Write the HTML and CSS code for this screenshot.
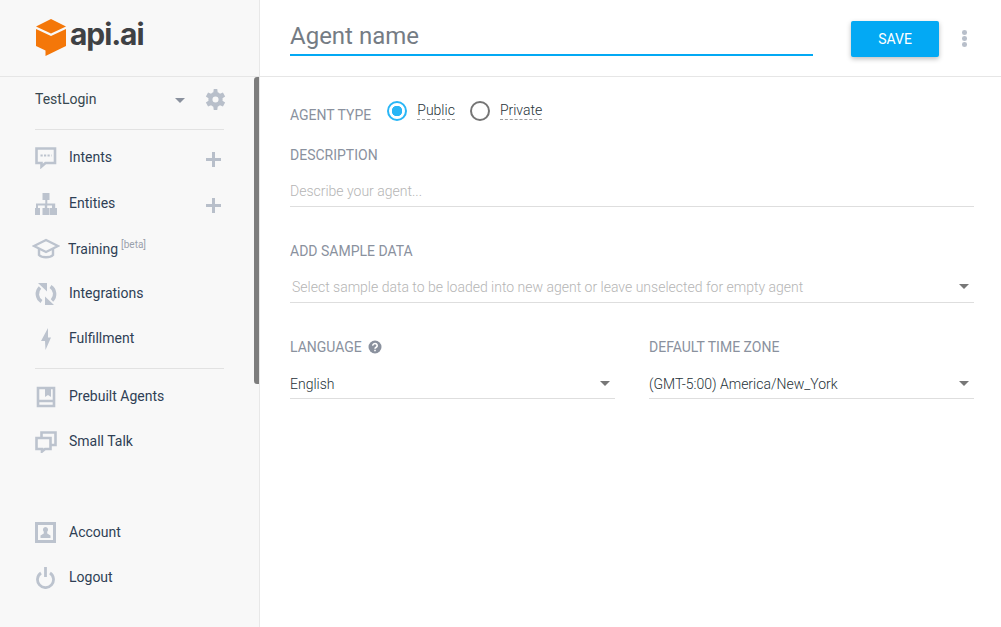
FILE: index.html
```html
<!DOCTYPE html>
<html lang="en">
<head>
	<meta charset="UTF-8">
	<title>api.ai</title>
	<link rel="stylesheet" href="styles.css">
</head>
<body>
	<aside class="sidebar">
		<div class="logo">
			<svg class="logo-mark" width="32" height="38" viewBox="0 0 32 38">
				<path fill="#f47709" d="M16 0 31 7.500 16 14.500 1 7.500z"/>
				<path fill="#f47709" d="M1 10 16 17 31 10V27L10.500 37V31.500L1 27z"/>
			</svg>
			<span class="logo-text">api.ai</span>
		</div>
		<div class="side-scroll">
			<div class="scrollbar"></div>
			<div class="agent-row">
				<span class="agent-name">TestLogin</span>
				<span class="caret caret-side"></span>
				<svg class="gear" width="21" height="21" viewBox="0 0 24 24">
					<path fill="#b8bfca" d="M20 13.500a8 8 0 0 0 0-3l3-2-2.500-4.500-3.400 1.300a8 8 0 0 0-2.600-1.500L14 0H10l-.5 3.800a8 8 0 0 0-2.600 1.500L3.500 4 1 8.500l3 2a8 8 0 0 0 0 3l-3 2L3.500 20l3.400-1.300a8 8 0 0 0 2.600 1.500L10 24h4l.5-3.800a8 8 0 0 0 2.600-1.500l3.400 1.300 2.500-4.500zM12 15.500a3.500 3.500 0 1 1 0-7 3.500 3.500 0 0 1 0 7z"/>
				</svg>
			</div>
			<nav class="nav nav-main">
				<a class="nav-item nav-item-first">
					<svg class="nav-icon" width="22" height="22" viewBox="0 0 22 22">
						<path fill="none" stroke="#bcc3ce" stroke-width="2.600" d="M1.500 1.500h18.500v14.500H10.500l-4 3.500V16H1.500z"/>
						<path stroke="#bcc3ce" stroke-width="2.200" stroke-dasharray="2.200 1.300" d="M5.500 8.500h11"/>
					</svg>
					<span class="nav-label">Intents</span>
					<span class="plus"></span>
				</a>
				<a class="nav-item">
					<svg class="nav-icon" width="22" height="22" viewBox="0 0 22 22">
						<path fill="#bcc3ce" d="M7.500 0h7v7h-2.200v3.500h7.900V15h1.800v7h-7v-7h2v-2.500h-4.800V15h2.300v7h-7v-7h2.300v-2.500H3V15h2v7H-1v-7h2v-4.500h9.300V7H7.500z"/>
					</svg>
					<span class="nav-label">Entities</span>
					<span class="plus"></span>
				</a>
				<a class="nav-item">
					<svg class="nav-icon nav-icon-wide" width="28" height="22" viewBox="0 0 28 22">
						<path fill="none" stroke="#bcc3ce" stroke-width="2.400" d="M14 2 26 8 14 14 2 8z"/>
						<path fill="none" stroke="#bcc3ce" stroke-width="2.400" d="M7 11v6c3 3 11 3 14 0v-6"/>
					</svg>
					<span class="nav-label nav-label-training">Training<sup class="beta">[beta]</sup></span>
				</a>
				<a class="nav-item">
					<svg class="nav-icon" width="22" height="22" viewBox="0 0 22 22">
						<path fill="none" stroke="#bcc3ce" stroke-width="3.400" d="M6.500 18.500A9 9 0 0 1 5 4.500M15.500 3.500A9 9 0 0 1 17 17.500"/>
						<path fill="#bcc3ce" d="M3 0h9v8.500zM19 22h-9v-8.500z"/>
					</svg>
					<span class="nav-label">Integrations</span>
				</a>
				<a class="nav-item">
					<svg class="nav-icon" width="22" height="22" viewBox="0 0 22 22">
						<path fill="#bcc3ce" d="M13 0v9.500h3L10.500 22l-.5-9H6z"/>
					</svg>
					<span class="nav-label">Fulfillment</span>
				</a>
			</nav>
			<nav class="nav nav-second">
				<a class="nav-item">
					<svg class="nav-icon" width="22" height="22" viewBox="0 0 22 22">
						<path fill="none" stroke="#bcc3ce" stroke-width="2.600" d="M3 2h16v18H3zM3 15h16"/>
						<path fill="#bcc3ce" d="M10 2h6v9l-3-2-3 2z"/>
					</svg>
					<span class="nav-label">Prebuilt Agents</span>
				</a>
				<a class="nav-item">
					<svg class="nav-icon" width="22" height="22" viewBox="0 0 22 22">
						<path fill="none" stroke="#bcc3ce" stroke-width="2.600" d="M1.500 7h14v11H10l-3 2.500V18H1.500zM6.500 6V1.500H20.500V14H16"/>
					</svg>
					<span class="nav-label">Small Talk</span>
				</a>
			</nav>
			<nav class="nav nav-bottom">
				<a class="nav-item">
					<svg class="nav-icon" width="22" height="22" viewBox="0 0 22 22">
						<path fill="none" stroke="#bcc3ce" stroke-width="3" d="M1.500 1.500h18v18h-18z"/>
						<path fill="#bcc3ce" d="M10.500 5a2.700 2.700 0 0 1 1.700 4.700v1.800l3.300 2V16h-10v-2.500l3.300-2V9.700A2.700 2.700 0 0 1 10.500 5z"/>
					</svg>
					<span class="nav-label">Account</span>
				</a>
				<a class="nav-item">
					<svg class="nav-icon" width="22" height="22" viewBox="0 0 22 22">
						<path fill="none" stroke="#bcc3ce" stroke-width="2.800" d="M6 6a8 8 0 1 0 9 0M10.500 0v10"/>
					</svg>
					<span class="nav-label">Logout</span>
				</a>
			</nav>
		</div>
	</aside>
	<main class="content">
		<header class="topbar">
			<div class="agent-title">Agent name</div>
			<button class="save-btn">SAVE</button>
			<div class="dots"><span></span><span></span><span></span></div>
		</header>
		<form class="form">
			<div class="type-row">
				<label class="field-label type-label">AGENT TYPE</label>
				<span class="radio radio-on"></span>
				<span class="radio-text">Public</span>
				<span class="radio"></span>
				<span class="radio-text">Private</span>
			</div>
			<label class="field-label desc-label">DESCRIPTION</label>
			<div class="input-line desc-line placeholder">Describe your agent...</div>
			<label class="field-label sample-label">ADD SAMPLE DATA</label>
			<div class="input-line select-line sample-line placeholder">
				<span>Select sample data to be loaded into new agent or leave unselected for empty agent</span>
				<span class="caret"></span>
			</div>
			<div class="two-col">
				<div class="col">
					<label class="field-label">LANGUAGE
						<svg class="help" width="14" height="14" viewBox="0 0 14 14">
							<circle cx="7" cy="7" r="6.500" fill="#8a919e"/>
							<path fill="none" stroke="#fff" stroke-width="1.600" d="M4.800 5.600a2.200 2 0 1 1 3.400 1.600c-.8.500-1.200.8-1.200 1.500"/>
							<path stroke="#fff" stroke-width="1.600" d="M7 9.700v1.600"/>
						</svg>
					</label>
					<div class="input-line select-line value-line">
						<span>English</span>
						<span class="caret"></span>
					</div>
				</div>
				<div class="col">
					<label class="field-label">DEFAULT TIME ZONE</label>
					<div class="input-line select-line value-line">
						<span>(GMT-5:00) America/New_York</span>
						<span class="caret"></span>
					</div>
				</div>
			</div>
		</form>
	</main>
</body>
</html>
```

FILE: styles.css
```css
*{box-sizing: border-box;}
html, body{height: 100%;}
body{
	margin: 0;
	display: flex;
	height: 627px;
	overflow: hidden;
	font-family: Roboto, "Liberation Sans", sans-serif;
	font-size: 14px;
	color: #37474f;
	background: #fff;
}

/* sidebar */
.sidebar{
	width: 260px;
	flex: none;
	background: #f8f8f8;
	border-right: 1px solid #e8e8e8;
}
.logo{
	height: 77px;
	padding: 19px 0 0 35px;
	display: flex;
	align-items: flex-start;
	border-bottom: 1px solid #e6e6e6;
}
.logo-text{
	font-family: Inter, sans-serif;
	font-weight: 700;
	font-size: 30px;
	line-height: 30px;
	letter-spacing: -1.100px;
	color: #3f4144;
	margin-left: 3px;
}
.side-scroll{
	position: relative;
	height: 550px;
	padding: 0 35px;
}
.scrollbar{
	position: absolute;
	right: 0;
	top: 0;
	width: 5px;
	height: 307px;
	background: #7d7d7d;
	border-radius: 3px 0 0 3px;
}
.agent-row{
	height: 53px;
	display: flex;
	align-items: center;
	border-bottom: 1px solid #e2e2e2;
	width: 189px;
	padding-bottom: 8px;
}
.agent-name{
	flex: 1;
	color: #37474f;
	margin-top: -1px;
}
.caret{
	width: 0;
	height: 0;
	border-left: 5px solid transparent;
	border-right: 5px solid transparent;
	border-top: 5px solid #777;
}
.caret-side{
	border-top-color: #8a919e;
	margin-right: 20px;
	margin-top: 3px;
}
.gear{
	margin-right: -2px;
}
.nav{
	display: flex;
	flex-direction: column;
	width: 189px;
}
.nav-main{
	padding: 6px 0 7px;
	border-bottom: 1px solid #e2e2e2;
}
.nav-second{
	padding-top: 5px;
}
.nav-bottom{
	margin-top: 46px;
}
.nav-item{
	height: 45px;
	display: flex;
	align-items: center;
	color: #2f3f55;
}
.nav-item-first{
	height: 45px;
	margin-top: -1px;
	margin-bottom: 1px;
}
.nav-icon{
	flex: none;
	margin-right: 12px;
}
.nav-icon-wide{
	margin-left: -3px;
	margin-right: 8px;
}
.nav-label{
	flex: 1;
	margin-top: -1px;
}
.nav-label-training{
	margin-top: 1px;
}
.beta{
	font-size: 10px;
	color: #9aa1ac;
	margin-left: 3px;
	vertical-align: 6px;
	line-height: 0;
}
.plus{
	width: 15px;
	height: 15px;
	margin-right: 3px;
	margin-top: 3px;
	background:
		linear-gradient(#b8bfca, #b8bfca) center / 15px 3px no-repeat,
		linear-gradient(#b8bfca, #b8bfca) center / 3px 15px no-repeat;
}

/* main */
.content{
	flex: 1;
	min-width: 0;
}
.topbar{
	height: 77px;
	display: flex;
	align-items: flex-start;
	padding: 21px 0 0 30px;
	border-bottom: 1px solid #e6e6e6;
}
.agent-title{
	width: 523px;
	height: 35px;
	font-size: 24px;
	line-height: 30px;
	color: #757c84;
	border-bottom: 2px solid #03a9f4;
}
.save-btn{
	width: 88px;
	height: 36px;
	margin-left: 38px;
	border: 0;
	border-radius: 2px;
	background: #03a9f4;
	color: #fff;
	font-family: Roboto, sans-serif;
	font-size: 14px;
	box-shadow: 0 2px 5px rgba(0, 0, 0, .26);
}
.dots{
	margin: 9px 0 0 23px;
	display: flex;
	flex-direction: column;
	gap: 1.500px;
}
.dots span{
	width: 5px;
	height: 4.500px;
	border-radius: 50%;
	background: #b8bfca;
}
.form{
	padding: 0 27px 0 30px;
}
.field-label{
	display: block;
	color: #8a919e;
	font-size: 14px;
	line-height: 16px;
}
.type-row{
	height: 45px;
	padding-top: 23px;
	display: flex;
	align-items: flex-start;
}
.type-label{
	margin: 7px 16px 0 0;
}
.radio{
	width: 20px;
	height: 20px;
	margin-top: 1px;
	border-radius: 50%;
	border: 2px solid #757575;
}
.radio-on{
	border-color: #29b6f6;
	background: radial-gradient(circle, #29b6f6 0 5px, transparent 5.500px);
}
.radio-text{
	margin: 0 15px 0 10px;
	height: 20px;
	padding-top: 2px;
	line-height: 16px;
	font-weight: 300;
	color: #263238;
	border-bottom: 1px dashed #9e9e9e;
}
.desc-label{
	margin-top: 25px;
}
.input-line{
	border-bottom: 1px solid #dedede;
	display: flex;
	justify-content: space-between;
	align-items: center;
}
.desc-line{
	height: 35px;
	margin-top: 9px;
	padding-top: 4px;
}
.placeholder{
	color: #b5b5b5;
	font-weight: 300;
	font-size: 14px;
}
.sample-label{
	margin-top: 36px;
}
.sample-line{
	height: 35px;
	margin-top: 9px;
	padding: 3px 0 0 2px;
}
.select-line .caret{
	margin-right: 5px;
}
.two-col{
	display: grid;
	grid-template-columns: 325px 325px;
	column-gap: 34px;
	margin-top: 36px;
}
.help{
	vertical-align: -2px;
	margin-left: 3px;
}
.value-line{
	height: 35px;
	margin-top: 9px;
	padding-top: 5px;
	font-weight: 300;
	color: #263238;
}
```
